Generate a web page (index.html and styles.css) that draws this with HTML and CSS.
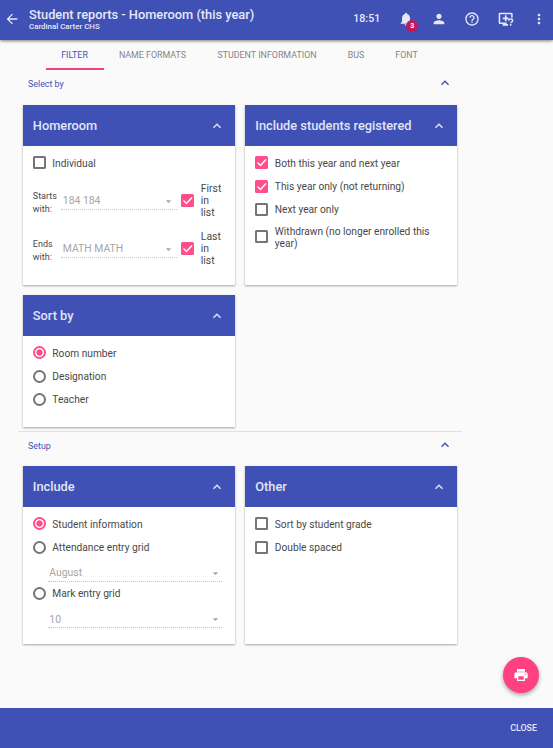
FILE: index.html
```html
<!DOCTYPE html>
<html lang="en">
<head>
<meta charset="utf-8">
<title>Student reports</title>
<link rel="stylesheet" href="styles.css">
</head>
<body>
<svg class="defs" width="0" height="0">
  <symbol id="up" viewBox="0 0 24 24"><path d="M12 8l-6 6 1.41 1.41L12 10.83l4.59 4.58L18 14z"/></symbol>
  <symbol id="down" viewBox="0 0 24 24"><path d="M6 9l6 6 6-6z"/></symbol>
</svg>
<header class="topbar">
  <svg class="icon back" viewBox="0 0 24 24"><path d="M20 11H7.83l5.59-5.59L12 4l-8 8 8 8 1.41-1.41L7.83 13H20v-2z"/></svg>
  <div class="titles">
    <h1>Student reports - Homeroom (this year)</h1>
    <p>Cardinal Carter CHS</p>
  </div>
  <span class="clock">18:51</span>
  <nav class="actions">
    <span class="bell"><svg class="icon" viewBox="0 0 24 24"><path d="M12 22c1.1 0 2-.9 2-2h-4c0 1.1.89 2 2 2zm6-6v-5c0-3.07-1.64-5.64-4.5-6.32V4c0-.83-.67-1.5-1.5-1.5s-1.5.67-1.5 1.5v.68C7.63 5.36 6 7.92 6 11v5l-2 2v1h16v-1l-2-2z"/></svg><b class="badge">3</b></span>
    <svg class="icon" viewBox="0 0 24 24"><path d="M12 12c2.21 0 4-1.79 4-4s-1.79-4-4-4-4 1.790-4 4 1.790 4 4 4zm0 2c-2.670 0-8 1.340-8 4v2h16v-2c0-2.660-5.330-4-8-4z"/></svg>
    <svg class="icon" viewBox="0 0 24 24"><path d="M11 18h2v-2h-2v2zm1-16C6.480 2 2 6.480 2 12s4.480 10 10 10 10-4.480 10-10S17.520 2 12 2zm0 18c-4.410 0-8-3.590-8-8s3.590-8 8-8 8 3.590 8 8-3.590 8-8 8zm0-14c-2.210 0-4 1.790-4 4h2c0-1.100.900-2 2-2s2 .900 2 2c0 2-3 1.750-3 5h2c0-2.250 3-2.500 3-5 0-2.210-1.790-4-4-4z"/></svg>
    <svg class="icon" viewBox="0 0 24 24"><path d="M3 2.500h17a2 2 0 0 1 2 2V10h-2.300V4.800H3.300v12.400H13v2.300h2V22H7v-2.500H3a2 2 0 0 1-2-2v-13a2 2 0 0 1 2-2z"/><path d="M10.300 6.500h2.600v3.200h3.200v2.600h-3.200v3.200h-2.600v-3.200H7.100V9.700h3.200z"/><path class="stroke" d="M16 14.500c0-3.500 6-3.500 6 0 0 2-3 2-3 4"/><path d="M17.800 19.600h2.400V22h-2.400z"/></svg>
    <svg class="icon" viewBox="0 0 24 24"><path d="M12 8c1.100 0 2-.900 2-2s-.900-2-2-2-2 .900-2 2 .900 2 2 2zm0 2c-1.100 0-2 .900-2 2s.900 2 2 2 2-.900 2-2-.900-2-2-2zm0 6c-1.100 0-2 .900-2 2s.900 2 2 2 2-.900 2-2-.900-2-2-2z"/></svg>
  </nav>
</header>
<nav class="tabs">
  <span class="tab active t1">FILTER</span><span class="tab t2">NAME FORMATS</span><span class="tab t3">STUDENT INFORMATION</span><span class="tab t4">BUS</span><span class="tab t5">FONT</span>
</nav>
<main>
  <section class="group select">
    <div class="grouphead"><span>Select by</span><svg class="chev"><use href="#up"/></svg></div>
    <div class="cards">
      <article class="card homeroom">
        <h2><span>Homeroom</span><svg class="chev"><use href="#up"/></svg></h2>
        <div class="body">
          <div class="row"><i class="box"></i><span>Individual</span></div>
          <div class="range"><span class="rl">Starts<br>with:</span><div class="sel"><span>184 184</span><svg class="arrow"><use href="#down"/></svg></div><i class="box on"><svg viewBox="0 0 13 13"><path d="M2.500 6.500l3 3 5.500-6"/></svg></i><span class="lst">First<br>in<br>list</span></div>
          <div class="range"><span class="rl">Ends<br>with:</span><div class="sel"><span>MATH MATH</span><svg class="arrow"><use href="#down"/></svg></div><i class="box on"><svg viewBox="0 0 13 13"><path d="M2.500 6.500l3 3 5.500-6"/></svg></i><span class="lst">Last<br>in<br>list</span></div>
        </div>
      </article>
      <article class="card">
        <h2><span>Include students registered</span><svg class="chev"><use href="#up"/></svg></h2>
        <div class="body">
          <div class="row"><i class="box on"><svg viewBox="0 0 13 13"><path d="M2.500 6.500l3 3 5.500-6"/></svg></i><span>Both this year and next year</span></div>
          <div class="row"><i class="box on"><svg viewBox="0 0 13 13"><path d="M2.500 6.500l3 3 5.500-6"/></svg></i><span>This year only (not returning)</span></div>
          <div class="row"><i class="box"></i><span>Next year only</span></div>
          <div class="row two"><i class="box"></i><span>Withdrawn (no longer enrolled this<br>year)</span></div>
        </div>
      </article>
      <article class="card">
        <h2><span>Sort by</span><svg class="chev"><use href="#up"/></svg></h2>
        <div class="body">
          <div class="row"><i class="radio on"></i><span>Room number</span></div>
          <div class="row"><i class="radio"></i><span>Designation</span></div>
          <div class="row"><i class="radio"></i><span>Teacher</span></div>
        </div>
      </article>
    </div>
  </section>
  <section class="group setup">
    <div class="grouphead"><span>Setup</span><svg class="chev"><use href="#up"/></svg></div>
    <div class="cards">
      <article class="card">
        <h2><span>Include</span><svg class="chev"><use href="#up"/></svg></h2>
        <div class="body">
          <div class="row"><i class="radio on"></i><span>Student information</span></div>
          <div class="row"><i class="radio"></i><span>Attendance entry grid</span></div>
          <div class="sel wide"><span>August</span><svg class="arrow"><use href="#down"/></svg></div>
          <div class="row"><i class="radio"></i><span>Mark entry grid</span></div>
          <div class="sel wide"><span>10</span><svg class="arrow"><use href="#down"/></svg></div>
        </div>
      </article>
      <article class="card">
        <h2><span>Other</span><svg class="chev"><use href="#up"/></svg></h2>
        <div class="body">
          <div class="row"><i class="box"></i><span>Sort by student grade</span></div>
          <div class="row"><i class="box"></i><span>Double spaced</span></div>
        </div>
      </article>
    </div>
  </section>
</main>
<button class="fab"><svg class="icon" viewBox="0 0 24 24"><path d="M19 8H5c-1.660 0-3 1.340-3 3v6h4v4h12v-4h4v-6c0-1.660-1.340-3-3-3zm-3 11H8v-5h8v5zm3-7c-.550 0-1-.450-1-1s.450-1 1-1 1 .450 1 1-.450 1-1 1zm-1-9H6v4h12V3z"/></svg></button>
<footer>CLOSE</footer>
</body>
</html>
```
FILE: styles.css
```css
* { box-sizing: border-box; }
body { margin: 0; height: 748px; display: flex; flex-direction: column; background: #fafafa; color: #484848; font: 10.2px/12px Roboto, sans-serif; overflow: hidden; position: relative; }
.defs { position: absolute; }
svg { display: block; flex: none; fill: currentColor; }
.icon { width: 16px; height: 16px; }
h1, h2, p { margin: 0; }
i { display: block; flex: none; }
.topbar { height: 39.500px; flex: none; display: flex; align-items: center; background: #3f51b5; color: #e6e8f6; padding: 0 6px 2px 4px; box-shadow: 0 1px 3px rgba(0,0,0,.5); position: relative; z-index: 1; }
.titles { margin-left: 9px; padding-top: 1px; flex: 1; white-space: nowrap; }
h1 { font-size: 12.800px; line-height: 15px; font-weight: 500; }
.titles p { font-size: 7.900px; line-height: 9px; font-weight: 500; }
.clock { font-size: 10.600px; font-weight: 500; width: 26.500px; padding-top: 1px; white-space: nowrap; }
.actions { display: flex; gap: 17.300px; margin-left: 18px; }
.bell { position: relative; }
.badge { position: absolute; left: 8.500px; top: 9px; width: 12px; height: 12px; border-radius: 50%; background: #c2185b; color: #fff; font-size: 7px; line-height: 12px; text-align: center; }
.stroke { fill: none; stroke: currentColor; stroke-width: 2.200; }
.tabs { display: flex; height: 31px; padding-left: 45.500px; font-size: 8.900px; line-height: 30px; color: #858585; flex: none; white-space: nowrap; }
.tab { text-align: center; flex: none; }
.tab.active { height: 30.500px; color: #3f51b5; border-bottom: 2px solid #f0417f; }
.t1 { width: 58px; } .t2 { width: 98px; } .t3 { width: 131px; } .t4 { width: 47px; } .t5 { width: 54px; }
main { width: 444px; margin-left: 18px; flex: 1; }
.grouphead { display: flex; justify-content: space-between; align-items: center; height: 34.500px; padding: 0 9px 9px 10px; color: #3f51b5; font-size: 8.900px; }
.grouphead span { padding-top: 2px; }
.chev { width: 16px; height: 16px; }
.cards { display: grid; grid-template-columns: 212px 212px; gap: 10.500px; padding-left: 4.500px; }
.select .cards { grid-template-rows: 180px 131.500px; row-gap: 10px; }
.setup .cards { grid-template-rows: 178px; }
.setup { border-top: 1px solid #e0e0e0; margin-top: 4px; }
.setup .grouphead { padding-bottom: 8px; }
.setup .grouphead span { padding-top: 3px; }
.card { background: #fff; box-shadow: 0 1px 2px rgba(0,0,0,.35); }
h2 { height: 41px; background: #3f51b5; color: #e2e5f5; display: flex; align-items: center; justify-content: space-between; padding: 0 10px 0 10.300px; font-size: 12.800px; font-weight: 500; white-space: nowrap; }
h2 span { padding-top: 1.200px; }
.body { padding: 5.300px 10.300px; }
.row { display: flex; align-items: center; height: 23.200px; gap: 6.500px; white-space: nowrap; }
.row span { padding-top: 1.500px; }
.row.two { height: 32px; }
.box { width: 13px; height: 13px; border: 2px solid #757575; border-radius: 1.500px; }
.box.on { background: #ff4f8b; border: 0; }
.box.on svg { width: 13px; height: 13px; fill: none; stroke: #fff; stroke-width: 1.300; }
.radio { width: 13px; height: 13px; border: 2px solid #757575; border-radius: 50%; }
.radio.on { border-color: #ff4f8b; background: radial-gradient(circle, #ff4f8b 2.800px, transparent 3.500px); }
.range { display: flex; align-items: center; height: 48px; }
.row + .range { margin-top: 2px; }
.rl { width: 28.500px; font-size: 9px; line-height: 13px; padding-top: 5px; }
.lst { padding-top: 1px; font-size: 10.400px; }
.sel { width: 116px; height: 18px; border-bottom: 1px dotted #c4c4c4; display: flex; align-items: center; justify-content: space-between; color: #a6a6a6; padding: 2px 3px 0 1.500px; font-size: 10.400px; white-space: nowrap; }
.range .sel { margin-top: 1px; }
.arrow { width: 11px; height: 11px; }
.range .box { margin: 0 6.500px 0 4px; }
.sel.wide { width: 174.500px; margin: 5.300px 0 0 15px; padding-right: 1.500px; }
.fab { position: absolute; left: 503px; top: 657px; width: 36px; height: 36px; padding: 0; border: 0; border-radius: 50%; background: #ff4081; color: #fff; display: grid; place-items: center; box-shadow: 0 2px 4px rgba(0,0,0,.35); }
footer { height: 40px; flex: none; background: #3f51b5; color: #e6e8f6; font-size: 8.900px; font-weight: 500; line-height: 40px; text-align: right; padding-right: 16px; }
```
